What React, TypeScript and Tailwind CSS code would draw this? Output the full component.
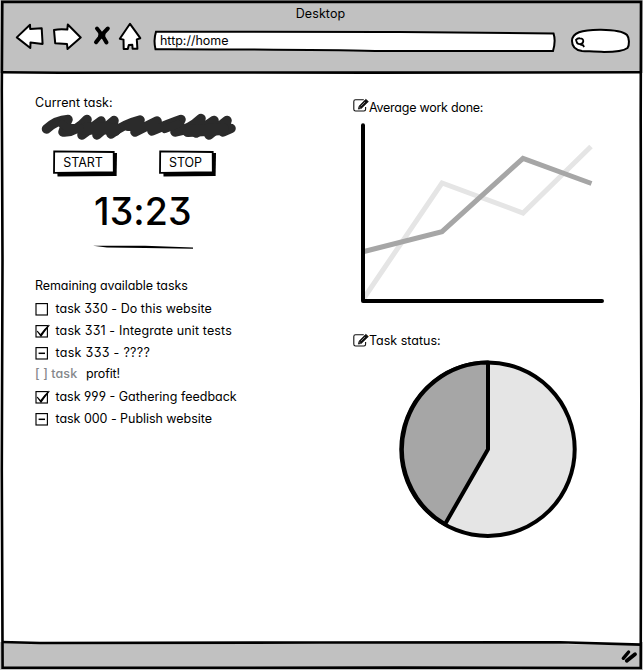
import React from "react";

type TaskState = "empty" | "done" | "partial";

function CheckBox({ state }: { state: TaskState }) {
  return (
    <svg className="h-[16px] w-[20px] shrink-0" viewBox="0 0 20 16" fill="none" stroke="#000">
      <rect x="1" y="2.6" width="11.4" height="11.4" fill="#fff" strokeWidth="1.15" />
      {state === "done" && (
        <path d="M2.2 8.2 L5.6 11.8 Q9 6.5 14.3 2.2 Q9.5 8 6 13.2 Q4.5 11 2.2 8.2 Z" fill="#000" strokeWidth="1.1" />
      )}
      {state === "partial" && <path d="M3.6 8.3 H10" strokeWidth="1.5" />}
    </svg>
  );
}

function Task({ state, label, spacing }: { state: TaskState; label: string; spacing: string }) {
  return (
    <li className="flex h-[22px] items-center">
      <CheckBox state={state} />
      <span className={"pl-[0.5px] " + spacing}>{label}</span>
    </li>
  );
}

function EditIcon() {
  return (
    <svg className="mt-px h-[15px] w-[16px] shrink-0 overflow-visible" viewBox="0 0 16 15" fill="none" stroke="#111">
      <path d="M10.8 1.7 H2.5 Q.8 1.7 .8 3.5 V11.3 Q.8 13 2.5 13 H11 Q12.6 13 12.6 11.3 V9" strokeWidth="1.1" />
      <path d="M5.3 11.1 L6.2 8 L12.8 1.3 L15.4 3.6 L8.3 10.4 Z" fill="#111" strokeWidth=".7" />
      <path d="M7.8 8.2 L12 4 M6.4 9.2 L7.6 10.3" stroke="#ccc" strokeWidth=".6" />
    </svg>
  );
}

function SketchButton({ label, className, wide }: { label: string; className: string; wide: boolean }) {
  const r = wide ? 61 : 54;
  return (
    <button className={"relative flex h-[27px] pb-[1px] pr-[5px] items-center justify-center " + className}>
      <svg className="absolute inset-0 h-full w-full">
        <path d={`M4 3 H${r + 3} L${r + 2.6} 26 L4.5 26.4 Z`} fill="#000" />
        <path d={`M1.2 1.3 L${r - 0.3} 2 L${r - 0.2} 22.2 L1 22.9 Z`} fill="#fff" stroke="#000" strokeWidth="1.8" />
      </svg>
      <span className="relative text-[12.5px] tracking-[-0.1px]">{label}</span>
    </button>
  );
}

function Header() {
  return (
    <header className="h-[73px] bg-[#c1c1c1]">
      <h1 className="flex h-[27px] items-center justify-center pr-[2px] pt-px text-[12.5px] tracking-[0.1px]">Desktop</h1>
      <div className="flex h-[32px] items-start">
        <svg className="-mt-[5px] ml-[14px] h-[28px] w-[130px] shrink-0" viewBox="14 22 130 28" fill="#fff" stroke="#000" strokeWidth="2" strokeLinejoin="round">
          <path d="M16.8 37.4 L30 24.8 L30.2 29 L41.7 28.2 L42.6 43.9 L30.5 42.4 L30.3 48 Z" />
          <path d="M54 30 Q60 28.7 67.3 29.6 L67.8 24.5 L80.7 37.5 L67.5 49 L67 44 L55.2 43.2 Z" />
          <path d="M130 23.8 L140.3 38.2 L136.8 39.4 L137.4 48.8 L132.6 48.8 L132.3 44.8 L128.8 44.9 L127.8 49 L123.7 49 L123.5 39.6 L119.8 38.7 Z" />
          <path d="M97 28.5 Q102 34 106.5 42.5 M107.8 28.5 Q102 34 96 42.2" strokeWidth="4" strokeLinecap="round" />
          <path d="M99.5 33 L104.5 34 L104 38 L99 37 Z" fill="#000" />
        </svg>
        <div className="relative ml-[9px] mt-[3px] flex h-[22px] w-[404px] items-center pl-[7px]">
          <svg className="absolute inset-0 h-full w-full" viewBox="153 30 404 22">
            <path d="M156 31.7 C245 31.2 322 32.1 400 32 C452 32.2 504 33.2 553.5 33.4 Q556 41 553 51 C489 50.9 440 51.4 375 51 C315 49.6 220 49.4 155.5 49.2 Q153.3 40 156 31.7 Z" fill="#fff" stroke="#000" strokeWidth="2" />
          </svg>
          <span className="relative text-[12.5px] tracking-[-0.02px]">http://home</span>
        </div>
        <svg className="ml-[12px] h-[28px] w-[64px]" viewBox="569 27 64 28" fill="#fff" stroke="#000" strokeWidth="2">
          <path d="M572 41 C572 33 581 29.5 601 29.7 C617 29.9 624 32 627 35 C629.5 38 629.5 45 627.5 48 C623 51.5 614 52 604 52 C596 51.4 587 51.3 582 51 C575 50 572 46 572 41 Z" />
          <path d="M576 39.8 Q577.5 38 580 38.3 Q583.4 38.4 583.3 41.2 Q583 44.2 580 44.1 Q577 44.2 576.6 41.6 Z" strokeWidth="1.8" />
          <path d="M580 44.5 L583.2 45.3 L584 47.2" strokeWidth="1.8" />
        </svg>
      </div>
    </header>
  );
}

function LeftColumn() {
  return (
    <section className="w-[318px] pt-[21px]">
      <h2 className="h-[18px] leading-[18px] tracking-[0.06px]">Current task:</h2>
      <svg className="ml-[5px] mt-px h-[28px] w-[198px]" viewBox="40 113 198 28" fill="none" stroke="#2b2b2b" strokeLinecap="round" strokeLinejoin="round" strokeWidth="9.5">
        <path d="M46.5 129 Q56 120 68 119.5 Q65 125 63 132 Q75 133 87 119.5 L82 135 L101 121 L97 135 L114 120.5 L111 134 Q124 124 140 120 L135 132 L157 121 L152 131 Q168 124 181 119.5 L175 132 Q189 130 201 118.5 L196 133 L214 120.5 L209 135 L227 120.5 L223 132 L231 128.5" />
        <path d="M84 129 L104 128 L115 130 M188 131 L207 130 L223 129" strokeWidth="12" />
        <path d="M62 124 L68 128 L80 128 M128 127 L146 127 L158 127 M165 129 L178 124" strokeWidth="8" />
      </svg>
      <div className="mt-[9px] flex gap-[41px] pl-[18px]">
        <SketchButton label="START" className="w-[65px]" wide />
        <SketchButton label="STOP" className="w-[58px]" wide={false} />
      </div>
      <div className="mt-[13px] h-[44px] pl-[59px] text-[37.5px] font-medium leading-[44px] tracking-[0.1px]">13:23</div>
      <svg className="ml-[58px] mt-[9px] h-[6px] w-[101px]" viewBox="93 242 101 6">
        <path d="M93 244.8 L145 244.7 L193 246.5 V247.8 L145 247.1 L107 246.6 Z" />
      </svg>
      <h2 className="mt-[28px] h-[18px] leading-[18px] tracking-[-0.08px]">Remaining available tasks</h2>
      <ul className="mt-[3px]">
        <Task state="empty" label="task 330 - Do this website" spacing="tracking-[0.04px]" />
        <Task state="done" label="task 331 - Integrate unit tests" spacing="tracking-[0.13px]" />
        <Task state="partial" label="task 333 - ????" spacing="tracking-[0.3px]" />
        <li className="flex h-[22px] items-center pb-[2px]">
          <span className="w-[51px] font-medium tracking-[0.1px] text-[#85878b]">[ ] task</span>
          <span className="tracking-[-0.15px]">profit!</span>
        </li>
        <Task state="done" label="task 999 - Gathering feedback" spacing="tracking-[0px]" />
        <Task state="partial" label="task 000 - Publish website" spacing="tracking-[-0.04px]" />
      </ul>
    </section>
  );
}

function RightColumn() {
  return (
    <section className="flex flex-col pt-[24px]">
      <h2 className="flex h-[19px] items-start">
        <EditIcon />
        <span className="leading-[22px] tracking-[-0.25px]">Average work done:</span>
      </h2>
      <svg className="ml-[7px] mt-[5px] h-[184px] w-[248px]" viewBox="360 121 248 184" fill="none">
        <path d="M364 298 L442 183 L523 213 L591 146.5" stroke="#e5e5e5" strokeWidth="5" />
        <path d="M364 251.5 L442 231.7 L523 158.3 L591.5 183.5" stroke="#a6a6a6" strokeWidth="5" />
        <path d="M363 125.3 V301 H602" stroke="#000" strokeWidth="4" strokeLinecap="round" strokeLinejoin="round" />
      </svg>
      <h2 className="mt-[27px] flex h-[19px] items-start">
        <EditIcon />
        <span className="leading-[18px] tracking-[0px]">Task status:</span>
      </h2>
      <svg className="ml-[45px] mt-[7px] h-[182px] w-[180px]" viewBox="398 358 180 182" stroke="#000" strokeWidth="4" strokeLinejoin="round">
        <circle cx="488" cy="449.3" r="86.7" fill="#e5e5e5" />
        <path d="M488 449.3 V362.6 A86.7 86.7 0 0 0 445 524.2 Z" fill="#a6a6a6" />
      </svg>
    </section>
  );
}

export default function App() {
  return (
    <div className="relative flex h-[670px] w-[643px] flex-col overflow-hidden bg-white font-[Inter,'Open_Sans',sans-serif] text-[12.5px] text-black [font-feature-settings:'cv11','ss01']">
      <Header />
      <main className="flex flex-1 pl-[35px]">
        <LeftColumn />
        <RightColumn />
      </main>
      <footer className="flex h-[28px] items-center justify-end bg-[#c1c1c1] pr-[5px]">
        <svg className="h-[16px] w-[18px]" viewBox="620 649 18 16" fill="none" stroke="#000" strokeLinecap="round">
          <path d="M623.3 659.3 L628.6 653" strokeWidth="3.4" />
          <path d="M626.8 661.8 L635 655.2" strokeWidth="3.8" />
        </svg>
      </footer>
      <svg className="pointer-events-none absolute inset-0 h-full w-full" viewBox="0 0 643 670" fill="none" stroke="#000" strokeWidth="2.6">
        <path d="M320 641.5 L641 641.5 V645 Z" fill="#fff" stroke="none" />
        <path d="M2.3 1.9 H641 L640.7 120 L641.3 400 L640.7 668 L400 667.6 L60 667.8 L2.6 667.6 L1.8 470 L2.5 260 L1.8 90 Z" />
        <path d="M2 72.3 L60 72.8 L200 72.5 L370 72.6 L641 72.3" />
        <path d="M2 642 L40 643 L320 642.5 L560 642.3 L641 644.6" />
      </svg>
    </div>
  );
}
